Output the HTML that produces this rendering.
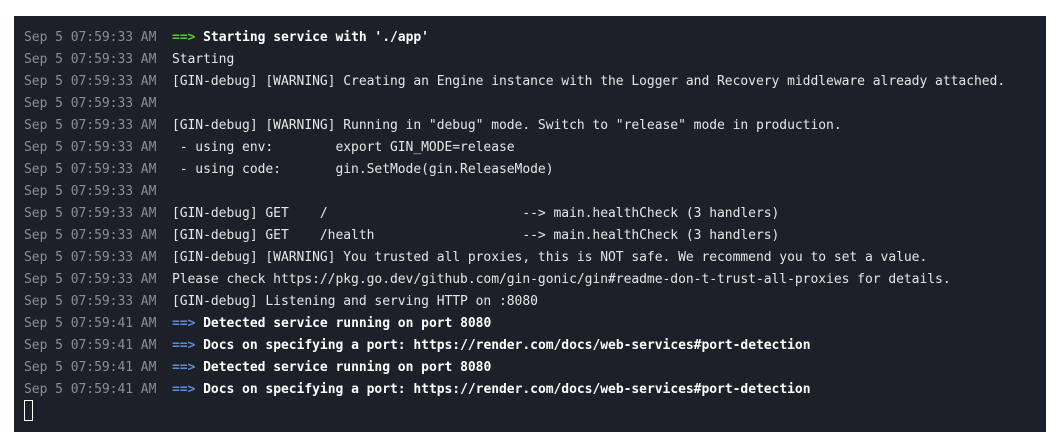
<!DOCTYPE html>
<html><head><meta charset="utf-8"><style>
html,body{margin:0;padding:0;background:#fff;width:1061px;height:445px;overflow:hidden}
#p{position:absolute;left:14px;top:16px;width:1032px;height:416px;background:#1d2029}
.l{position:absolute;left:10px;height:22px;line-height:22px;font:13px "DejaVu Sans Mono",monospace;letter-spacing:-0.04px;color:#e6e6e6;white-space:pre}
.t{color:#8b8e95}
.g{color:#58c73a;font-weight:bold}
.b{color:#5b8ed6;font-weight:bold}
.w{font-weight:bold;color:#fff}
#c{position:absolute;left:10px;top:384px;width:7px;height:19px;border:1px solid #fff}
</style></head><body><div id="p">
<div class="l" style="top:14px"><span class="t">Sep 5 07:59:33 AM</span>  <span class="g">==&gt;</span> <span class="w">Starting service with './app'</span></div>
<div class="l" style="top:36px"><span class="t">Sep 5 07:59:33 AM</span>  Starting</div>
<div class="l" style="top:58px"><span class="t">Sep 5 07:59:33 AM</span>  [GIN-debug] [WARNING] Creating an Engine instance with the Logger and Recovery middleware already attached.</div>
<div class="l" style="top:80px"><span class="t">Sep 5 07:59:33 AM</span></div>
<div class="l" style="top:102px"><span class="t">Sep 5 07:59:33 AM</span>  [GIN-debug] [WARNING] Running in "debug" mode. Switch to "release" mode in production.</div>
<div class="l" style="top:124px"><span class="t">Sep 5 07:59:33 AM</span>   - using env:        export GIN_MODE=release</div>
<div class="l" style="top:146px"><span class="t">Sep 5 07:59:33 AM</span>   - using code:       gin.SetMode(gin.ReleaseMode)</div>
<div class="l" style="top:168px"><span class="t">Sep 5 07:59:33 AM</span></div>
<div class="l" style="top:190px"><span class="t">Sep 5 07:59:33 AM</span>  [GIN-debug] GET    /                         --&gt; main.healthCheck (3 handlers)</div>
<div class="l" style="top:212px"><span class="t">Sep 5 07:59:33 AM</span>  [GIN-debug] GET    /health                   --&gt; main.healthCheck (3 handlers)</div>
<div class="l" style="top:234px"><span class="t">Sep 5 07:59:33 AM</span>  [GIN-debug] [WARNING] You trusted all proxies, this is NOT safe. We recommend you to set a value.</div>
<div class="l" style="top:256px"><span class="t">Sep 5 07:59:33 AM</span>  Please check https://pkg.go.dev/github.com/gin-gonic/gin#readme-don-t-trust-all-proxies for details.</div>
<div class="l" style="top:278px"><span class="t">Sep 5 07:59:33 AM</span>  [GIN-debug] Listening and serving HTTP on :8080</div>
<div class="l" style="top:300px"><span class="t">Sep 5 07:59:41 AM</span>  <span class="b">==&gt;</span> <span class="w">Detected service running on port 8080</span></div>
<div class="l" style="top:322px"><span class="t">Sep 5 07:59:41 AM</span>  <span class="b">==&gt;</span> <span class="w">Docs on specifying a port: https://render.com/docs/web-services#port-detection</span></div>
<div class="l" style="top:344px"><span class="t">Sep 5 07:59:41 AM</span>  <span class="b">==&gt;</span> <span class="w">Detected service running on port 8080</span></div>
<div class="l" style="top:366px"><span class="t">Sep 5 07:59:41 AM</span>  <span class="b">==&gt;</span> <span class="w">Docs on specifying a port: https://render.com/docs/web-services#port-detection</span></div>
<div id="c"></div>
</div></body></html>
